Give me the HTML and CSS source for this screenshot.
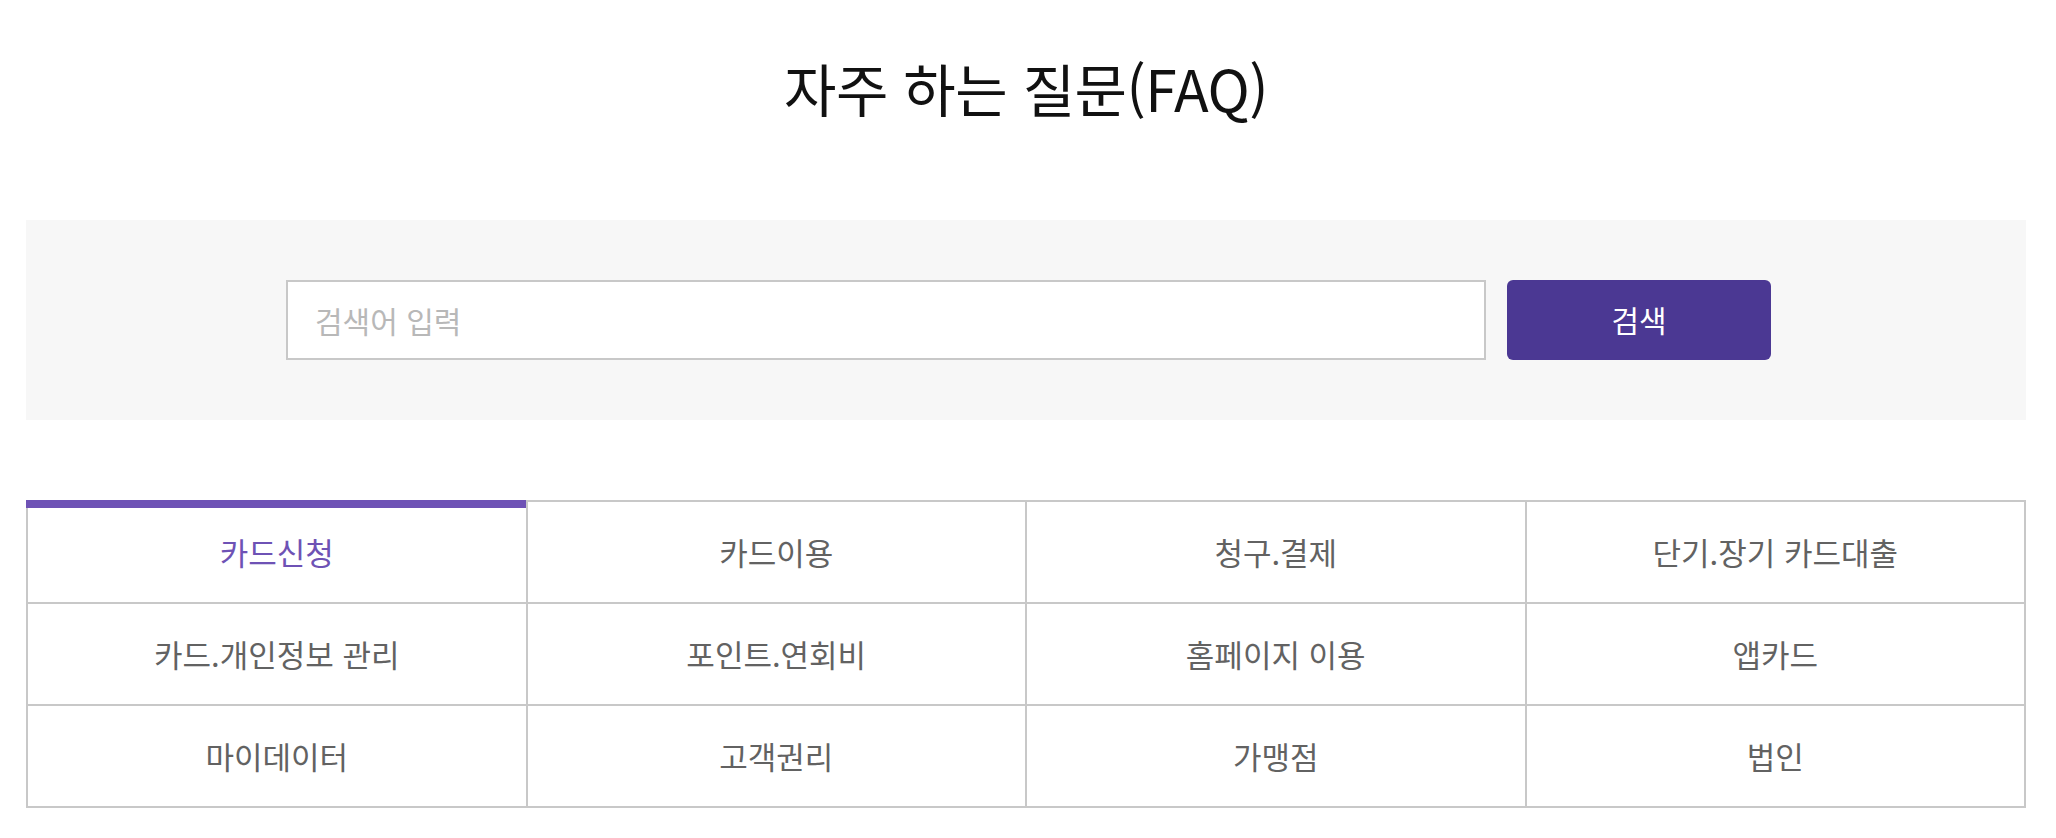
FILE: index.html
```html
<!DOCTYPE html>
<html lang="ko">
<head>
<meta charset="utf-8">
<title>자주 하는 질문(FAQ)</title>
<link rel="stylesheet" href="styles.css">
</head>
<body>
<div class="page">
  <h1 class="title">자주 하는 질문(FAQ)</h1>
  <div class="search-area">
    <form class="search-form">
      <input class="search-input" type="text" placeholder="검색어 입력">
      <button class="search-btn" type="button">검색</button>
    </form>
  </div>
  <ul class="tabs">
    <li class="tab active">카드신청</li>
    <li class="tab">카드이용</li>
    <li class="tab">청구.결제</li>
    <li class="tab">단기.장기 카드대출</li>
    <li class="tab">카드.개인정보 관리</li>
    <li class="tab">포인트.연회비</li>
    <li class="tab">홈페이지 이용</li>
    <li class="tab">앱카드</li>
    <li class="tab">마이데이터</li>
    <li class="tab">고객권리</li>
    <li class="tab">가맹점</li>
    <li class="tab">법인</li>
  </ul>
</div>
</body>
</html>
```
FILE: styles.css
```css
* { box-sizing: border-box; }
html, body { margin: 0; padding: 0; background: #fff; }
body {
  font-family: "Noto Sans CJK KR", "Noto Sans", sans-serif;
  color: #111;
}
.page { padding: 0 30px 0 26px; }
.title {
  margin: 0;
  padding-top: 56px;
  height: 220px;
  line-height: 62px;
  font-size: 57px;
  font-weight: 400;
  text-align: center;
  color: #111;
  letter-spacing: -0.5px;
}
.search-area {
  background: #f7f7f7;
  height: 200px;
  padding: 60px 0;
}
.search-form {
  display: flex;
  gap: 21px;
  margin: 0;
  padding-left: 260px;
}
.search-input {
  width: 1200px;
  height: 80px;
  border: 2px solid #c8c8c8;
  background: #fff;
  padding: 0 27px;
  font-family: inherit;
  font-size: 30px;
  color: #333;
  outline: none;
}
.search-input::placeholder { color: #b8b8b8; }
.search-btn {
  width: 264px;
  height: 80px;
  border: 0;
  border-radius: 6px;
  background: #4b3893;
  color: #fff;
  font-family: inherit;
  font-size: 30px;
  padding: 0 0 2px;
}
.tabs {
  list-style: none;
  margin: 80px 0 0;
  padding: 0;
  display: grid;
  grid-template-columns: repeat(4, 1fr);
  border-top: 2px solid #c8c8c8;
  border-left: 2px solid #c8c8c8;
}
.tab {
  position: relative;
  height: 102px;
  display: flex;
  align-items: center;
  justify-content: center;
  border-right: 2px solid #c8c8c8;
  border-bottom: 2px solid #c8c8c8;
  font-size: 31px;
  font-weight: 400;
  color: #626262;
  padding-bottom: 2px;
}
.tab.active { color: #6e52b5; }
.tab.active::before {
  content: "";
  position: absolute;
  top: -2px;
  left: -2px;
  right: 0;
  height: 8px;
  background: #6e52b5;
}
```
